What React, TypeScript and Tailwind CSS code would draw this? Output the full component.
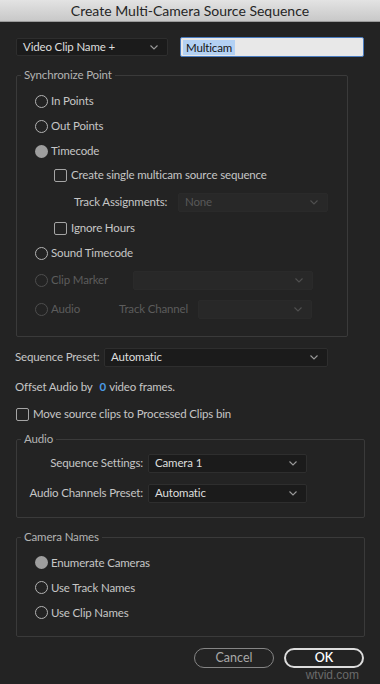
import React from "react";

const font = { fontFamily: "Lato, 'Noto Sans', sans-serif" };
const T = "text-[11.5px] tracking-[-0.15px] whitespace-nowrap";

function Chevron({ color = "#9a9a9a" }: { color?: string }) {
  return (
    <svg width="8" height="5" viewBox="0 0 8 5" className="shrink-0">
      <path d="M0.5 0.5 L4 4 L7.5 0.5" fill="none" stroke={color} strokeWidth="1.1" />
    </svg>
  );
}

function Select({
  value,
  w,
  h = "h-[19px]",
  disabled = false,
}: {
  value?: string;
  w: string;
  h?: string;
  disabled?: boolean;
}) {
  return (
    <div
      className={`${w} ${h} shrink-0 flex items-center justify-between pl-[6px] pr-[9px] rounded-[2px] border ${
        disabled ? "bg-[#282828] border-[#2a2a2a]" : "bg-[#1b1b1b] border-[#2e2e2e]"
      }`}
    >
      <span className={`${T} ${disabled ? "text-[#585858]" : "text-[#dedede]"}`}>{value}</span>
      <Chevron color={disabled ? "#505050" : "#9a9a9a"} />
    </div>
  );
}

function Radio({ checked = false, disabled = false }: { checked?: boolean; disabled?: boolean }) {
  if (checked)
    return <div className="w-[13px] h-[13px] rounded-full bg-[#9e9e9e] shrink-0" />;
  return (
    <div
      className={`w-[13px] h-[13px] rounded-full border-[1.5px] shrink-0 ${
        disabled ? "border-[#4e4e4e]" : "border-[#b3b3b3]"
      }`}
    />
  );
}

function Check() {
  return <div className="w-[13px] h-[13px] rounded-[2px] border-[1.5px] border-[#a5a5a5] shrink-0" />;
}

function RadioRow({
  label,
  h,
  checked,
  disabled,
}: {
  label: string;
  h: string;
  checked?: boolean;
  disabled?: boolean;
}) {
  return (
    <div className={`${h} flex items-center ml-[18px]`}>
      <Radio checked={checked} disabled={disabled} />
      <span className={`ml-[3px] ${T} ${disabled ? "text-[#5c5c5c]" : "text-[#c6c6c6]"}`}>{label}</span>
    </div>
  );
}

export default function App() {
  return (
    <div className="w-[380px] h-[684px] bg-[#232323] flex flex-col overflow-hidden" style={font}>
      <div className="h-[22px] shrink-0 bg-gradient-to-b from-[#e3e3e3] to-[#c8c8c8] flex items-center justify-center border-b border-[#9a9a9a]">
        <span className="text-[14px] text-[#252525]">Create Multi-Camera Source Sequence</span>
      </div>

      <div className="mt-[15px] h-[20px] flex items-center">
        <div className="ml-[16px]">
          <Select value="Video Clip Name +" w="w-[152px]" h="h-[18px]" />
        </div>
        <div className="ml-[12px] w-[184px] h-[20px] bg-[#e8e8e8] border border-[#4a7cc0] rounded-[2px] flex items-center pl-[2px]">
          <span className={`bg-[#b3d1f3] ${T} text-[#141414] px-[3px] leading-[15px]`}>Multicam</span>
        </div>
      </div>

      <fieldset className="mt-[10px] ml-[16px] w-[332px] border border-[#3a3a3a] rounded-[2px] pb-[11px]">
        <legend className={`ml-[4px] px-[3px] ${T} leading-[16px] text-[#b3b3b3]`}>Synchronize Point</legend>
        <div className="h-[6px]" />
        <RadioRow label="In Points" h="h-[24px]" />
        <RadioRow label="Out Points" h="h-[26px]" />
        <RadioRow label="Timecode" h="h-[24px]" checked />
        <div className="h-[24px] flex items-center ml-[37px]">
          <Check />
          <span className={`ml-[4px] ${T} text-[#c6c6c6]`}>Create single multicam source sequence</span>
        </div>
        <div className="h-[30px] flex items-center ml-[57px]">
          <span className={`w-[104px] shrink-0 ${T} text-[#c6c6c6]`}>Track Assignments:</span>
          <Select value="None" w="w-[150px]" disabled />
        </div>
        <div className="h-[22px] flex items-center ml-[37px]">
          <Check />
          <span className={`ml-[4px] ${T} text-[#c6c6c6]`}>Ignore Hours</span>
        </div>
        <RadioRow label="Sound Timecode" h="h-[28px]" />
        <div className="h-[26px] flex items-center ml-[18px]">
          <div className="w-[98px] shrink-0 flex items-center">
            <Radio disabled />
            <span className={`ml-[3px] ${T} text-[#5c5c5c]`}>Clip Marker</span>
          </div>
          <Select w="w-[180px]" disabled />
        </div>
        <div className="h-[32px] flex items-center ml-[18px]">
          <div className="w-[84px] shrink-0 flex items-center">
            <Radio disabled />
            <span className={`ml-[3px] ${T} text-[#5c5c5c]`}>Audio</span>
          </div>
          <span className={`w-[79px] shrink-0 ${T} text-[#5c5c5c]`}>Track Channel</span>
          <Select w="w-[114px]" disabled />
        </div>
      </fieldset>

      <div className="mt-[10px] h-[20px] flex items-center ml-[15px]">
        <span className={`w-[89px] shrink-0 ${T} text-[#c6c6c6]`}>Sequence Preset:</span>
        <Select value="Automatic" w="w-[224px]" />
      </div>

      <div className={`mt-[10px] h-[20px] flex items-center ml-[15px] ${T} text-[#c6c6c6]`}>
        <span>Offset Audio by</span>
        <span className="ml-[7px] text-[#4a9ae6] font-bold">0</span>
        <span className="ml-[3px]">video frames.</span>
      </div>

      <div className="mt-[7px] h-[20px] flex items-center ml-[16px]">
        <Check />
        <span className={`ml-[4px] ${T} text-[#c6c6c6]`}>Move source clips to Processed Clips bin</span>
      </div>

      <fieldset className="mt-[7px] ml-[16px] w-[349px] border border-[#3a3a3a] rounded-[2px] pb-[14px]">
        <legend className={`ml-[4px] px-[3px] ${T} leading-[16px] text-[#b3b3b3]`}>Audio</legend>
        <div className="h-[6px]" />
        <div className="h-[20px] flex items-center">
          <span className={`w-[126px] shrink-0 text-right ${T} text-[#c6c6c6]`}>Sequence Settings:</span>
          <div className="ml-[5px]">
            <Select value="Camera 1" w="w-[159px]" />
          </div>
        </div>
        <div className="mt-[10px] h-[20px] flex items-center">
          <span className={`w-[126px] shrink-0 text-right ${T} text-[#c6c6c6]`}>Audio Channels Preset:</span>
          <div className="ml-[5px]">
            <Select value="Automatic" w="w-[159px]" />
          </div>
        </div>
      </fieldset>

      <fieldset className="mt-[11px] ml-[16px] w-[349px] border border-[#3a3a3a] rounded-[2px] pb-[11px]">
        <legend className={`ml-[4px] px-[3px] ${T} leading-[16px] text-[#b3b3b3]`}>Camera Names</legend>
        <div className="h-[5px]" />
        <RadioRow label="Enumerate Cameras" h="h-[25px]" checked />
        <RadioRow label="Use Track Names" h="h-[25px]" />
        <RadioRow label="Use Clip Names" h="h-[25px]" />
      </fieldset>

      <div className="mt-[11px] flex justify-end pr-[16px] gap-[10px]">
        <div className="w-[80px] h-[20px] rounded-full border-[1.5px] border-[#858585] flex items-center justify-center text-[12.5px] text-[#a8a8a8]">
          Cancel
        </div>
        <div className="w-[80px] h-[20px] rounded-full border-[2px] border-[#dcdcdc] flex items-center justify-center text-[12.5px] text-white font-semibold">
          OK
        </div>
      </div>
      <div
        className="mt-[1px] pr-[21px] text-right text-[12px] leading-[12px] text-[#6a6a6a]"
        style={{ fontFamily: "'Liberation Sans', sans-serif" }}
      >
        wtvid.com
      </div>
    </div>
  );
}
